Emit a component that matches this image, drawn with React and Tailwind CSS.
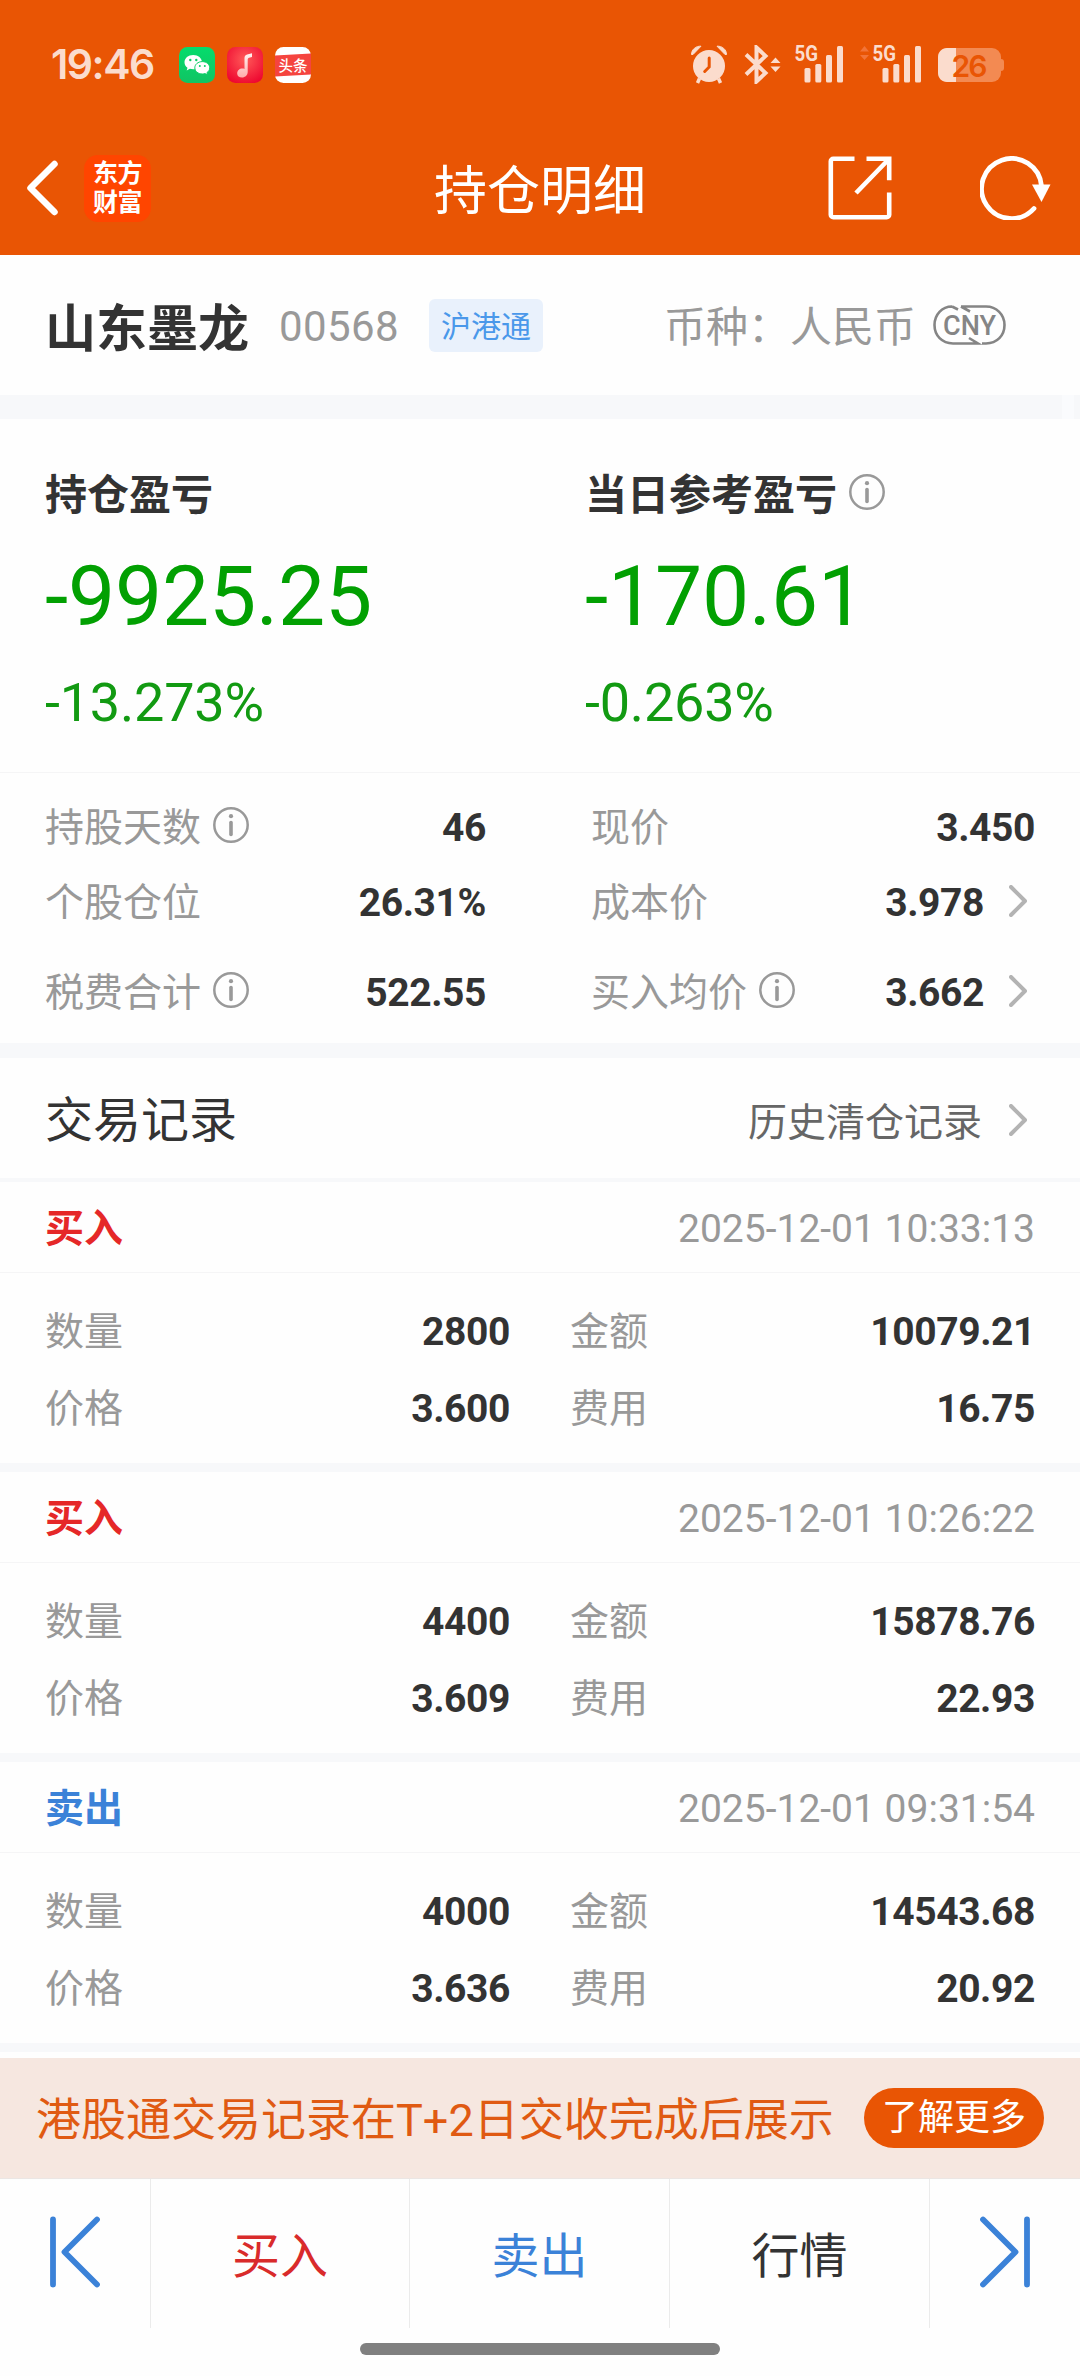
import clsx from "clsx";

const stats = [
  [
    { label: "持股天数", value: "46", info: true },
    { label: "个股仓位", value: "26.31%" },
    { label: "税费合计", value: "522.55", info: true },
  ],
  [
    { label: "现价", value: "3.450" },
    { label: "成本价", value: "3.978", link: true },
    { label: "买入均价", value: "3.662", info: true, link: true },
  ],
];

const records = [
  { side: "买入", time: "2025-12-01 10:33:13", qty: "2800", amount: "10079.21", price: "3.600", fee: "16.75" },
  { side: "买入", time: "2025-12-01 10:26:22", qty: "4400", amount: "15878.76", price: "3.609", fee: "22.93" },
  { side: "卖出", time: "2025-12-01 09:31:54", qty: "4000", amount: "14543.68", price: "3.636", fee: "20.92" },
];

function InfoIcon({ className }) {
  return (
    <svg className={clsx("h-9 w-9 shrink-0", className)} viewBox="0 0 36 36" fill="none" stroke="#999999">
      <circle cx="18" cy="18" r="16.7" strokeWidth="2.5" />
      <path d="M18 15.5v12" strokeWidth="3.6" strokeLinecap="round" />
      <circle cx="18" cy="9.2" r="2.1" fill="#999999" stroke="none" />
    </svg>
  );
}

function Chevron() {
  return (
    <svg className="mr-2 mb-1.5 ml-[25px] h-8 w-[18px] shrink-0" viewBox="0 0 18 32" fill="none">
      <path d="M2 2l14 14L2 30" stroke="#b3b3b3" strokeWidth="4" strokeLinecap="round" strokeLinejoin="round" />
    </svg>
  );
}

function Signal({ arrows }) {
  return (
    <svg className="-mt-2.5 h-12 w-[63px]" viewBox="0 -10 63 48" fill="#fbdccd">
      {arrows && <path d="M1 6.5L5.500 1l4.500 5.500zM1 10l4.500 5 4.500-5z" fill="#f27438" />}
      <text x="13.5" y="16" fontSize="22" fontWeight="700" fontFamily="Roboto, sans-serif" textLength="23.500" lengthAdjust="spacingAndGlyphs">
        5G
      </text>
      <rect x="23.5" y="23" width="6" height="14.5" rx="1.5" />
      <rect x="34.3" y="19" width="6" height="18.5" rx="1.5" />
      <rect x="45" y="10" width="6" height="27.5" rx="1.5" />
      <rect x="56" y="1" width="6" height="36.5" rx="1.5" />
    </svg>
  );
}

function StatusBar() {
  return (
    <div className="flex h-32 items-center justify-between pr-[76px] pl-[51px]">
      <div className="flex items-center">
        <span className="w-[128px] font-[Inter] text-[41px] leading-none font-semibold tracking-[-1.5px] text-[#fbdccd]">19:46</span>
        <div className="mt-0.5 flex gap-3">
          {/* wechat */}
          <svg className="h-9 w-9" viewBox="0 0 36 36">
            <defs>
              <linearGradient id="wx" x1="0" y1="0" x2="0" y2="1">
                <stop offset="0" stopColor="#05dc6c" />
                <stop offset="1" stopColor="#10c463" />
              </linearGradient>
            </defs>
            <rect width="36" height="36" rx="8.5" fill="url(#wx)" />
            <path d="M14.2 8C9.2 8 5.5 11.2 5.5 15.2c0 2.3 1.2 4.2 3 5.5l-.8 2.7 3.2-1.6c1 .3 2.1.5 3.3.5 5 0 8.8-3.1 8.8-7.1S19.2 8 14.2 8z" fill="#fff" />
            <path d="M23.3 14.6c-4.3 0-7.5 2.8-7.5 6.2s3.2 6.2 7.5 6.2c1 0 1.900-.1 2.700-.4l2.600 1.400-.7-2.300c1.700-1.200 2.800-2.900 2.800-4.900 0-3.400-3.200-6.200-7.400-6.200z" fill="#fff" stroke="#0cce66" strokeWidth="1" />
            <g fill="#0cce66">
              <circle cx="11.3" cy="13" r="1.2" />
              <circle cx="17.3" cy="13" r="1.2" />
              <circle cx="20.8" cy="19" r="1" />
              <circle cx="25.8" cy="19" r="1" />
            </g>
          </svg>
          {/* music */}
          <svg className="h-9 w-9" viewBox="0 0 36 36">
            <defs>
              <radialGradient id="music" cx=".5" cy=".35" r=".7">
                <stop offset="0" stopColor="#ff5a58" />
                <stop offset="1" stopColor="#ee0730" />
              </radialGradient>
              <linearGradient id="note" x1="0" y1="0" x2="0" y2="1">
                <stop offset="0" stopColor="#fff4f2" />
                <stop offset="1" stopColor="#ffabaa" />
              </linearGradient>
            </defs>
            <rect width="36" height="36" rx="8.5" fill="url(#music)" />
            <path
              d="M25 6.300v3.600l-2.900.8c-.9.3-1.400.8-1.400 1.800v12.500c0 3-2.500 5.500-5.700 5.500-2.800 0-4.800-1.700-4.800-4.100 0-2.800 2.300-4.900 5.200-4.900.8 0 1.500.1 2.100.4V11c0-1.900.9-3.100 2.700-3.500z"
              fill="url(#note)"
            />
          </svg>
          {/* toutiao */}
          <svg className="h-9 w-9" viewBox="0 0 36 36">
            <rect width="36" height="36" rx="8.5" fill="#fff" />
            <path d="M0 8.5L36 6.5v21L0 29.5z" fill="#f5443f" />
            <text x="18" y="23.5" textAnchor="middle" fontSize="14.5" fontWeight="500" fill="#fff" fontFamily="'Noto Sans CJK SC', sans-serif">
              头条
            </text>
          </svg>
        </div>
      </div>

      <div className="flex items-center">
        {/* alarm */}
        <svg className="h-[39px] w-[38px]" viewBox="0 0 38 39" fill="none">
          <path d="M9.500 33.500L7.500 38M28.500 33.500l2 4.500" stroke="#fbdccd" strokeWidth="3.500" />
          <path d="M1.500 9.500C1.500 4.500 6 .8 11 1.200L3 9.500zM36.500 9.500C36.500 4.500 32 .8 27 1.200l8 8.300z" fill="#fbdccd" stroke="#fbdccd" />
          <circle cx="19" cy="21" r="16" fill="#fbdccd" />
          <path d="M19.2 13v9l-4.5 4.500" stroke="#e95504" strokeWidth="3" strokeLinecap="round" />
        </svg>
        {/* bluetooth */}
        <svg className="ml-4 h-[39px] w-[37px]" viewBox="0 0 37 39" fill="none">
          <path d="M2 9.500l19.500 18.500-9 8.500V2.500l9 8.500L2 29.500" stroke="#fbdccd" strokeWidth="4" />
          <path d="M26.500 18L31.500 12.500l5 5.500zM26.500 21.500l5 5.500 5-5.500z" fill="#fbdccd" />
        </svg>
        <Signal />
        <div className="ml-[15px]">
          <Signal arrows />
        </div>
        {/* battery */}
        <svg className="mt-0.5 ml-4 h-[34px] w-[66px]" viewBox="0 0 66 34">
          <path d="M63 11c2 0 3 1 3 3v6c0 2-1 3-3 3z" fill="#f38a52" />
          <rect width="63" height="34" rx="9" fill="#f38a52" />
          <path d="M9 0h9v34H9c-5 0-9-4-9-9V9c0-5 4-9 9-9z" fill="#fbdccd" />
          <text x="31.5" y="28.5" textAnchor="middle" fontSize="30" fontWeight="600" fontFamily="Inter, sans-serif" textLength="36" fill="#e95504">
            26
          </text>
        </svg>
      </div>
    </div>
  );
}

function NavBar() {
  return (
    <div className="grid h-[120px] grid-cols-[1fr_auto_1fr] items-center text-white">
      <div className="flex items-center pl-[26px]">
        <svg className="h-14 w-8" viewBox="0 0 32 56" fill="none">
          <path d="M28.5 4L4.5 28l24 24" stroke="#fff" strokeWidth="6.5" strokeLinecap="round" strokeLinejoin="round" />
        </svg>
        <div className="ml-[26px] flex h-[67px] w-[67px] flex-col items-center justify-center gap-1 rounded-[14px] bg-[#ff4500] text-[25px] leading-[25px] font-bold tracking-[-0.5px]">
          <span>东方</span>
          <span>财富</span>
        </div>
      </div>
      <h1 className="mt-[9px] text-[53px] leading-none">持仓明细</h1>
      <div className="flex items-center justify-end pr-[29px]">
        <svg className="h-16 w-16" viewBox="0 0 64 64" fill="none" stroke="#fff" strokeWidth="4.6">
          <path d="M26.5 2.8H5.3a2.5 2.5 0 0 0-2.5 2.5v53.4a2.5 2.5 0 0 0 2.5 2.5h53.4a2.5 2.5 0 0 0 2.5-2.5V36.500" />
          <path d="M38.5 2.8h22.7v21.5M60 4L28 37" />
        </svg>
        <svg className="ml-[88px] h-16 w-[71px]" viewBox="0 0 71 64" fill="none">
          <path d="M61.5 30A30 30 0 1 0 54 52.5" stroke="#fff" strokeWidth="4.8" strokeLinecap="round" />
          <path d="M52 28.5h18.5L61.5 46z" fill="#fff" />
        </svg>
      </div>
    </div>
  );
}

function StockTitle() {
  return (
    <div className="flex h-[140px] items-center pl-[45px]">
      <span className="mt-2 text-[51px] leading-none font-bold">山东墨龙</span>
      <span className="mt-1 ml-[30px] text-[42px] leading-none tracking-[0.4px] text-[#999999]">00568</span>
      <span className="ml-[30px] flex h-[53px] w-[114px] items-center justify-center rounded-md bg-[#e9f1fc] pt-1 text-[30px] leading-none text-[#4a98ea]">
        沪港通
      </span>
      <span className="mt-1.5 ml-auto text-[42px] leading-none text-[#999999]">币种：人民币</span>
      <svg className="mr-[74px] ml-[17px] h-10 w-[73px]" viewBox="0 0 73 40" fill="none">
        <path
          d="M19 1.5C9 1.5 1.5 9.500 1.500 20S9 38.500 20 38.500h25L36 33M28 1.500h25c10.500 0 18.500 8 18.500 18.500S64 38.500 53 38.500h-4M28 1.500l9 5M19 1.500l6 3"
          stroke="#858585"
          strokeWidth="2.6"
        />
        <text x="36.5" y="29.5" textAnchor="middle" fontSize="27" fontWeight="500" fontFamily="Roboto, sans-serif" textLength="53" lengthAdjust="spacingAndGlyphs" fill="#858585">
          CNY
        </text>
      </svg>
    </div>
  );
}

function ProfitBlock({ label, amount, percent, info }) {
  return (
    <div className="pt-[56px] pl-[45px]">
      <div className="flex h-[42px] items-center text-[42px] leading-none font-bold">
        {label}
        {info && <InfoIcon className="mb-2 ml-3" />}
      </div>
      <div className="mt-[38px] text-[84px] leading-none tracking-[-0.2px] text-[#02a002]">{amount}</div>
      <div className="mt-[37px] text-[54px] leading-none tracking-[-0.2px] text-[#129a12]">{percent}</div>
    </div>
  );
}

function StatColumn({ items }) {
  return (
    <div className="grid grid-rows-[75px_75px_105px] pt-[18px] text-[39px] leading-none">
      {items.map((it) => (
        <div key={it.label} className="flex items-center">
          <span className="text-[#999999]">{it.label}</span>
          {it.info && <InfoIcon className="mb-2 ml-3" />}
          <span className="ml-auto font-bold tracking-[-0.4px]">{it.value}</span>
          {it.link && <Chevron />}
        </div>
      ))}
    </div>
  );
}

function Pair({ label, value }) {
  return (
    <div className="flex h-[77px] items-center justify-between">
      <span className="text-[#999999]">{label}</span>
      <span className="font-bold tracking-[-0.4px]">{value}</span>
    </div>
  );
}

function Record({ side, time, qty, amount, price, fee }) {
  return (
    <div className="h-[290px] border-b-[9px] border-[#f7f8fa] text-[39px] leading-none">
      <div className="flex h-[91px] items-center justify-between border-b border-[#f5f5f6] pt-[5px] pr-[45px] pl-[45px]">
        <span className={clsx("font-bold", side === "买入" ? "text-[#e52828]" : "text-[#3b82d8]")}>{side}</span>
        <span className="text-[#999999]">{time}</span>
      </div>
      <div className="grid grid-cols-[465px_465px] gap-x-[60px] pt-[21px] pl-[45px]">
        <Pair label="数量" value={qty} />
        <Pair label="金额" value={amount} />
        <Pair label="价格" value={price} />
        <Pair label="费用" value={fee} />
      </div>
    </div>
  );
}

function SkipIcon({ flip }) {
  return (
    <svg
      className={clsx("mb-1 h-[72px] w-[52px]", flip && "-scale-x-100")}
      viewBox="0 0 52 72"
      fill="none"
      stroke="#3b82d8"
      strokeWidth="5.8"
      strokeLinecap="round"
      strokeLinejoin="round"
    >
      <path d="M4 3.5v65M48 3.5L15.5 36 48 68.5" />
    </svg>
  );
}

export default function App() {
  return (
    <div className="flex h-[2376px] w-[1080px] flex-col overflow-hidden bg-[#fefefe] font-[Roboto,'Noto_Sans_CJK_SC',sans-serif] text-[#333333]">
      <header className="h-[255px] shrink-0 bg-[#e95504]">
        <StatusBar />
        <NavBar />
      </header>

      <StockTitle />
      <div className="flex h-6 justify-end bg-[#f7f8fa] pr-1.5">
        <div className="w-3 bg-[#fafbfd]"></div>
      </div>

      <section className="grid h-[354px] grid-cols-2 border-b border-[#f5f5f6]">
        <ProfitBlock label="持仓盈亏" amount="-9925.25" percent="-13.273%" />
        <ProfitBlock label="当日参考盈亏" amount="-170.61" percent="-0.263%" info />
      </section>

      <section className="grid h-[285px] grid-cols-[441px_444px] gap-x-[105px] border-b-[15px] border-[#f7f8fa] pl-[45px]">
        {stats.map((items, i) => (
          <StatColumn key={i} items={items} />
        ))}
      </section>

      <div className="flex h-[124px] items-center justify-between border-b-4 border-[#f7f8fa] pr-[45px] pl-[45px] leading-none">
        <h2 className="mt-1.5 text-[48px]">交易记录</h2>
        <div className="mt-2.5 flex items-center text-[39px] text-[#666666]">
          <span className="-mr-0.5 pr-1">历史清仓记录</span>
          <Chevron />
        </div>
      </div>

      {records.map((r) => (
        <Record key={r.time} {...r} />
      ))}

      <div className="mt-1.5 flex h-[121px] items-center justify-between border-b border-[#ebe6e4] bg-[#f6e7e0] pr-9 pl-9 leading-none">
        <span className="mt-1 text-[45px] text-[#e05a12]">港股通交易记录在T+2日交收完成后展示</span>
        <button className="h-[60px] w-[180px] rounded-full bg-[#e95504] text-[36px] leading-none text-white">了解更多</button>
      </div>

      <nav className="grid h-[149px] grid-cols-[151px_259px_260px_260px_150px] divide-x divide-[#ebebeb] text-[48px] leading-none">
        <div className="flex items-center justify-center">
          <SkipIcon />
        </div>
        <div className="flex items-center justify-center pt-1.5 text-[#d92b2b]">买入</div>
        <div className="flex items-center justify-center pt-1.5 text-[#3b82d8]">卖出</div>
        <div className="flex items-center justify-center pt-1.5">行情</div>
        <div className="flex items-center justify-center">
          <SkipIcon flip />
        </div>
      </nav>

      <div className="mx-auto mt-[15px] h-3 w-[360px] rounded-full bg-[#808080]"></div>
    </div>
  );
}
